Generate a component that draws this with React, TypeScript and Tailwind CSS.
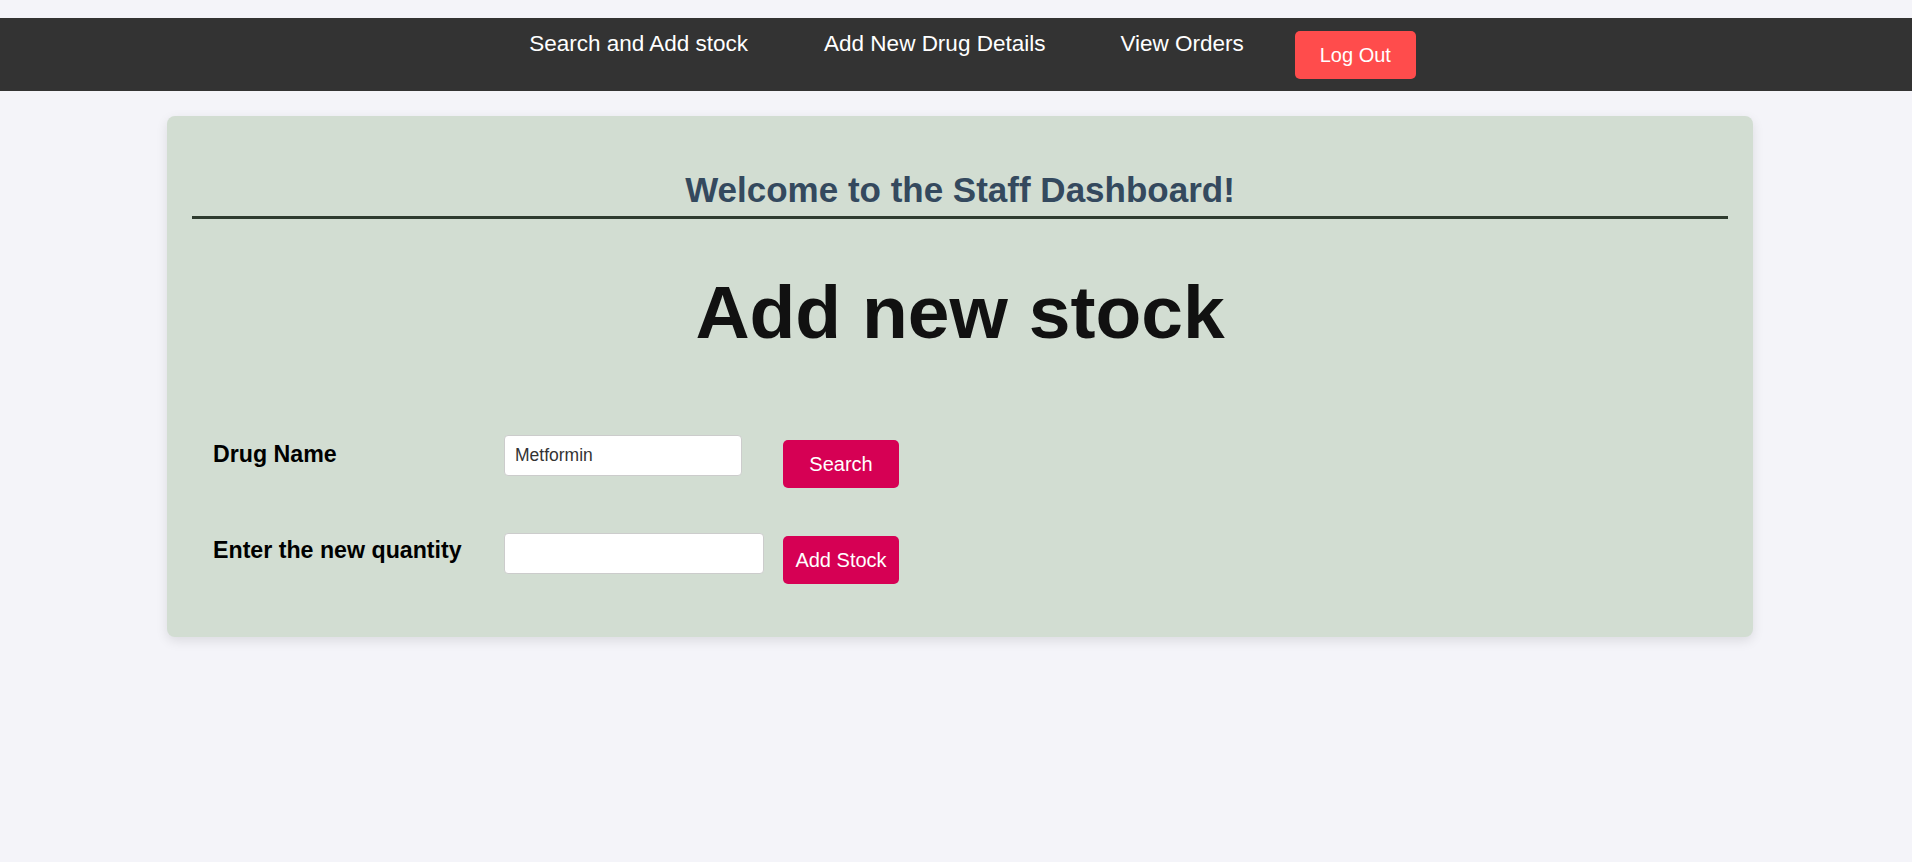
import React from 'react';

const font = { fontFamily: '"Liberation Sans", Arial, Helvetica, sans-serif' };

const NavBar: React.FC = () => {
  return (
    <nav className="h-[73px] bg-[#333333] flex justify-center items-start pt-[13px] pl-[33px]">
      <a href="#" className="text-white text-[22.5px] leading-[25px] mr-[76px]">Search and Add stock</a>
      <a href="#" className="text-white text-[22.5px] leading-[25px] mr-[75px]">Add New Drug Details</a>
      <a href="#" className="text-white text-[22.5px] leading-[25px] mr-[51px]">View Orders</a>
      <button className="w-[121px] h-[48px] rounded-[5px] bg-[#ff4c4c] text-white text-[20px] leading-[23px]">
        Log Out
      </button>
    </nav>
  );
};

export default function App() {
  return (
    <div className="min-h-[862px] bg-[#f4f4f9] pt-[18px] pb-[40px]" style={font}>
      <NavBar />

      <div className="ml-[167px] mt-[25px] w-[1586px] h-[521px] rounded-[8px] bg-[#d2ddd2] shadow-[0_4px_12px_rgba(0,0,0,0.1)] px-[25px] pt-[54px]">
        <h2 className="text-center text-[35px] leading-[40px] font-bold text-[#34495e]">
          Welcome to the Staff Dashboard!
        </h2>
        <div className="mt-[6px] h-[3px] bg-[#2e3b2f]"></div>

        <h1 className="mt-[51px] text-center text-[75px] leading-[84px] font-bold text-[#111111]">
          Add new stock
        </h1>

        <div className="mt-[81px] pl-[21px] grid grid-cols-[291px_279px_auto] items-start">
          {/* row 1 */}
          <label className="mt-[6px] text-[23.2px] leading-[26px] font-bold text-black">Drug Name</label>
          <input
            type="text"
            defaultValue="Metformin"
            className="w-[238px] h-[41px] bg-white border border-[#cccccc] rounded-[4px] px-[10px] text-[17.5px] text-[#333333] outline-none"
          />
          <button className="mt-[5px] w-[116px] h-[48px] rounded-[5px] bg-[#d60054] text-white text-[20px] leading-[23px]">
            Search
          </button>

          {/* row 2 */}
          <label className="mt-[49px] text-[23.2px] leading-[26px] font-bold text-black">Enter the new quantity</label>
          <input
            type="text"
            className="mt-[45px] w-[260px] h-[41px] bg-white border border-[#cccccc] rounded-[4px] px-[10px] text-[17.5px] text-[#333333] outline-none"
          />
          <button className="mt-[48px] w-[116px] h-[48px] rounded-[5px] bg-[#d60054] text-white text-[20px] leading-[23px]">
            Add Stock
          </button>
        </div>
      </div>
    </div>
  );
}
